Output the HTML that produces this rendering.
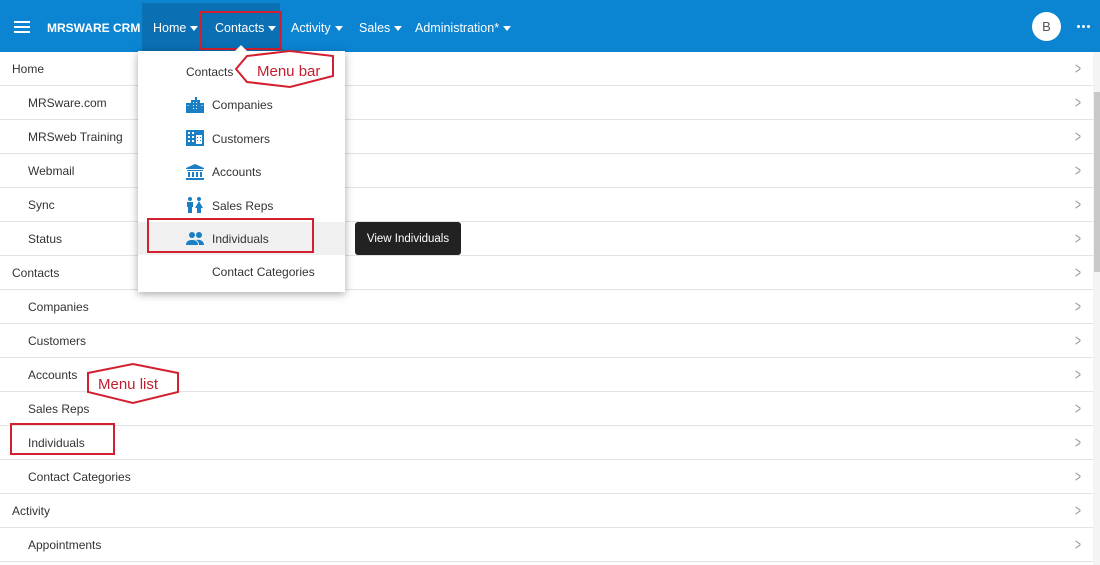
<!DOCTYPE html><html><head><style>
body{margin:0;width:1100px;height:565px;overflow:hidden;background:#fff;font-family:"Liberation Sans",sans-serif;position:relative}
.hdr{position:absolute;left:0;top:0;width:1100px;height:52px;background:#0b84d2;color:#fff;font-size:12.5px}
.hdr span{position:absolute;top:21px}
.act{position:absolute;left:142px;top:3px;width:138px;height:49px;background:#0a6fb3}
.tri{display:inline-block;border-left:4px solid transparent;border-right:4px solid transparent;border-top:5px solid #fff;vertical-align:middle;margin-left:4px}
.row{position:absolute;left:0;width:1093px;height:33px;border-bottom:1px solid #e3e3e3;font-size:12px;color:#333;line-height:34px}
.row .chev{position:absolute;right:10px;top:0;color:#999;font-size:17px;transform:scaleX(.6)}
.dd{position:absolute;left:138px;top:51px;width:207px;height:241px;background:#fff;box-shadow:0 2px 8px rgba(0,0,0,.35);font-size:12px;color:#333}
.dd div{position:absolute;left:74px;height:20px;line-height:20px}
.ic{position:absolute;left:48px;width:18px;height:16px}
.red{position:absolute;border:2px solid #d32030}
</style></head><body>
<div class="hdr">
<div class="act"></div>
<div style="position:absolute;left:14px;top:21px;width:16px;height:2px;background:#fff;box-shadow:0 5px 0 #fff,0 10px 0 #fff"></div>
<span style="left:47px;font-weight:bold;font-size:12px">MRSWARE CRM</span>
<span style="left:153px">Home<i class="tri"></i></span>
<span style="left:215px">Contacts<i class="tri"></i></span>
<span style="left:291px">Activity<i class="tri"></i></span>
<span style="left:359px">Sales<i class="tri"></i></span>
<span style="left:415px">Administration*<i class="tri"></i></span>
<div style="position:absolute;left:1032px;top:12px;width:29px;height:29px;border-radius:50%;background:#fff;color:#555;font-size:13px;text-align:center;line-height:29px">B</div>
<div style="position:absolute;left:1077px;top:25px;width:3px;height:3px;border-radius:50%;background:#fff;box-shadow:5px 0 0 #fff,10px 0 0 #fff"></div>
</div>
<div class="red" style="left:200px;top:11px;width:78px;height:35px"></div>

<div class="row" style="top:52px;padding-left:12px;width:1081px">Home<span class="chev">&gt;</span></div>
<div class="row" style="top:86px;padding-left:28px;width:1065px">MRSware.com<span class="chev">&gt;</span></div>
<div class="row" style="top:120px;padding-left:28px;width:1065px">MRSweb Training<span class="chev">&gt;</span></div>
<div class="row" style="top:154px;padding-left:28px;width:1065px">Webmail<span class="chev">&gt;</span></div>
<div class="row" style="top:188px;padding-left:28px;width:1065px">Sync<span class="chev">&gt;</span></div>
<div class="row" style="top:222px;padding-left:28px;width:1065px">Status<span class="chev">&gt;</span></div>
<div class="row" style="top:256px;padding-left:12px;width:1081px">Contacts<span class="chev">&gt;</span></div>
<div class="row" style="top:290px;padding-left:28px;width:1065px">Companies<span class="chev">&gt;</span></div>
<div class="row" style="top:324px;padding-left:28px;width:1065px">Customers<span class="chev">&gt;</span></div>
<div class="row" style="top:358px;padding-left:28px;width:1065px">Accounts<span class="chev">&gt;</span></div>
<div class="row" style="top:392px;padding-left:28px;width:1065px">Sales Reps<span class="chev">&gt;</span></div>
<div class="row" style="top:426px;padding-left:28px;width:1065px">Individuals<span class="chev">&gt;</span></div>
<div class="row" style="top:460px;padding-left:28px;width:1065px">Contact Categories<span class="chev">&gt;</span></div>
<div class="row" style="top:494px;padding-left:12px;width:1081px">Activity<span class="chev">&gt;</span></div>
<div class="row" style="top:528px;padding-left:28px;width:1065px">Appointments<span class="chev">&gt;</span></div>
<div style="position:absolute;left:1093px;top:52px;width:7px;height:513px;background:#f4f4f4"></div>
<div style="position:absolute;left:1094px;top:92px;width:6px;height:180px;background:#c8c8c8"></div>

<div class="dd">
<div style="left:48px;top:11px">Contacts</div>
<svg class="ic" style="top:46px" viewBox="0 0 18 16"><path fill="#1a7fc4" d="M0 6h5v10H0zM5 3h4V0h2v3h3v13H5zM14 6h4v10h-4z"/><path fill="#fff" d="M7 5h1v1H7zM10 5h1v1h-1zM7 8h1v1H7zM10 8h1v1h-1zM7 11h1v1H7zM10 11h1v1h-1zM1.5 8h1v1h-1zM15.5 8h1v1h-1z"/></svg>
<div style="top:44px">Companies</div>
<svg class="ic" style="top:79px" viewBox="0 0 18 16"><path fill="#1a7fc4" d="M0 0h18v16H0z"/><path fill="#fff" d="M2 2h2v2H2zM6 2h2v2H6zM2 6h2v2H2zM6 6h2v2H6zM2 10h2v2H2zM6 10h2v2H6zM10 5h6v9h-6z"/><path fill="#1a7fc4" d="M11 7h1v1h-1zM14 7h1v1h-1zM11 10h1v1h-1zM14 10h1v1h-1z"/></svg>
<div style="top:78px">Customers</div>
<svg class="ic" style="top:113px" viewBox="0 0 18 16"><path fill="#1a7fc4" d="M9 0l9 4v1H0V4zM1 6h16v1H1zM2 8h2v5H2zM6 8h2v5H6zM10 8h2v5h-2zM14 8h2v5h-2zM0 14h18v2H0z"/></svg>
<div style="top:111px">Accounts</div>
<svg class="ic" style="top:146px" viewBox="0 0 18 16"><circle cx="4" cy="2" r="2" fill="#1a7fc4"/><circle cx="13" cy="2" r="2" fill="#1a7fc4"/><path fill="#1a7fc4" d="M1 5h6v5H6v6H2v-6H1zM13 4l4 7h-2v5h-4v-5H9z"/></svg>
<div style="top:145px">Sales Reps</div>
<div style="left:0;top:171px;width:207px;height:33px;background:#f0f0f0"></div>
<svg class="ic" style="top:180px" viewBox="0 0 18 16"><circle cx="6" cy="4" r="3" fill="#1a7fc4"/><circle cx="13" cy="4" r="3" fill="#1a7fc4"/><path fill="#1a7fc4" d="M0 14c0-4 3-5 6-5s6 1 6 5zM10 9c4-1 8 1 8 5h-5c0-2-1-4-3-5z"/></svg>
<div style="top:178px">Individuals</div>
<div style="top:211px">Contact Categories</div>
<div style="left:97px;top:-6px;width:0;height:0;border-left:6px solid transparent;border-right:6px solid transparent;border-bottom:6px solid #fff"></div>
</div>
<div class="red" style="left:147px;top:218px;width:163px;height:31px"></div>
<div style="position:absolute;left:355px;top:222px;width:106px;height:33px;background:#222;color:#fff;border-radius:3px;font-size:11.5px;line-height:34px;text-align:center">View Individuals</div>

<svg style="position:absolute;left:0;top:0" width="1100" height="565">
<polygon points="236,69 247,56 290,51 333,56 333,76 290,87 247,82" fill="#fff" stroke="#d32030" stroke-width="2"/>
<text x="257" y="76" font-family="Liberation Sans" font-size="15" fill="#c0202e">Menu bar</text>
<polygon points="88,373 88,392 133,403 178,392 178,373 133,364" fill="#fff" stroke="#d32030" stroke-width="2"/>
<text x="98" y="389" font-family="Liberation Sans" font-size="15" fill="#c0202e">Menu list</text>
<rect x="11" y="424" width="103" height="30" fill="none" stroke="#d32030" stroke-width="2"/>
</svg>
</body></html>
